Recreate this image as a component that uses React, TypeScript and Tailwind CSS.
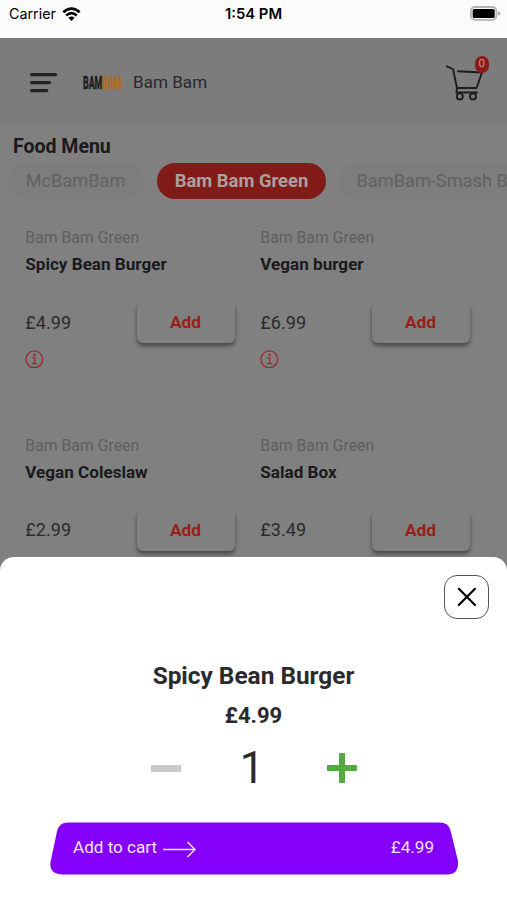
import React from "react";

type Item = { name: string; price: string; info: boolean };

const items: Item[] = [
  { name: "Spicy Bean Burger", price: "£4.99", info: true },
  { name: "Vegan burger", price: "£6.99", info: true },
  { name: "Vegan Coleslaw", price: "£2.99", info: false },
  { name: "Salad Box", price: "£3.49", info: false },
];

function StatusBar() {
  return (
    <div className="grid h-[38px] grid-cols-3 bg-[#fbfbfb] pt-[5px] font-[Inter,sans-serif] text-black">
      <div className="flex h-[18px] items-center gap-[6px] pl-[9px] text-[14.3px]">
        <span>Carrier</span>
        <svg width="19" height="15" viewBox="0 0 19 15" fill="none" stroke="black" strokeWidth="2.6">
          <path d="M1.3 5.2Q9.5-1.9 17.7 5.2M4.2 8.4Q9.5 3.8 14.8 8.4" />
          <path d="M6.4 10.7Q9.5 8.1 12.6 10.7L9.5 13.9Z" fill="black" stroke="none" />
        </svg>
      </div>
      <div className="flex h-[18px] items-center justify-center text-[14.8px] font-semibold whitespace-nowrap">1:54 PM</div>
      <div className="flex h-[17px] items-center justify-end pr-[6px]">
        <svg width="31" height="15" viewBox="0 0 31 15">
          <rect x="0.9" y="1" width="25.5" height="12.8" rx="4" fill="#fbfbfb" stroke="#b4b4b4" strokeWidth="1.8" />
          <rect x="2.7" y="2.9" width="22" height="9" rx="1.5" fill="black" />
          <path d="M28 5.2Q30.4 6 30.4 7.4T28 9.7Z" fill="#a9a9a9" />
        </svg>
      </div>
    </div>
  );
}

function Header() {
  return (
    <header className="flex h-[88px] items-center bg-[#7c7c7c] pt-px pl-[30px] pr-[16px]">
      <svg width="28" height="21" viewBox="0 0 28 21" stroke="#242428" strokeWidth="3.2" strokeLinecap="round">
        <path d="M1.6 2.6H25.7M1.6 10.6H19.6M1.6 18.6H16.8" />
      </svg>
      <div className="ml-[25px] w-[38px]">
        <div className="w-[74px] origin-left scale-x-[0.505] whitespace-nowrap text-[17.5px] leading-[18px] font-bold">
          <span className="text-[#1d1d22] [-webkit-text-stroke:0.6px_#1d1d22]">BAM</span>
          <span className="text-[#b06a1c] [-webkit-text-stroke:0.6px_#b06a1c]">BAM</span>
        </div>
      </div>
      <span className="ml-[12px] text-[17.1px] text-[#29292c]">Bam Bam</span>
      <div className="relative ml-auto h-[50px] w-[45px]">
        <svg width="45" height="50" viewBox="0 0 45 50" fill="none" stroke="#1d1d20" strokeWidth="1.9" strokeLinecap="round" strokeLinejoin="round">
          <path d="M.9 8.3L7 11L11 30H30.5L36 14.5L12 13.2M11 30L10.4 34.5H31" />
          <circle cx="13.8" cy="38.4" r="3" />
          <circle cx="27" cy="38.4" r="3" />
        </svg>
        <span className="absolute top-[-2px] left-[28.5px] flex h-[17px] w-[14.5px] items-center justify-center rounded-full bg-[#8c1c18] text-[11.5px] text-[#b89a99]">0</span>
      </div>
    </header>
  );
}

function Card({ item }: { item: Item }) {
  return (
    <article className="h-[207.5px]">
      <div className="pl-[0.3px] text-[15.8px] leading-[20px] text-[#5f5f5f]">Bam Bam Green</div>
      <h2 className="mt-[6px] pl-[0.3px] text-[17.1px] leading-[21px] font-bold text-[#1a1a1c]">{item.name}</h2>
      <div className="mt-[27px] flex h-[41px] items-center">
        <span className="w-[111.5px] pl-[0.3px] text-[18.1px] leading-[22px] text-[#2b2b2d]">{item.price}</span>
        <button className="h-[41px] w-[98px] rounded-[6px] bg-[#808080] pt-px text-[17.3px] font-bold text-[#961f1b] shadow-[0_3px_4px_rgba(0,0,0,0.45)]">Add</button>
      </div>
      {item.info && (
        <svg className="mt-[7px]" width="19" height="19" viewBox="0 0 19 19" fill="none" stroke="#98292c" strokeWidth="1.3">
          <circle cx="9.3" cy="9.3" r="8.4" />
          <path d="M7.2 7.8H9.8V13.4M7 13.7H12.3" />
          <circle cx="9.5" cy="5" r="0.6" fill="#98292c" />
        </svg>
      )}
    </article>
  );
}

function CartSheet() {
  return (
    <section className="absolute inset-x-0 bottom-0 flex h-[343.5px] flex-col items-center rounded-t-[14px] bg-white text-[#2b2b2e]">
      <button className="mt-[18px] mr-[18px] flex h-[44.5px] w-[45px] items-center justify-center self-end rounded-[13px] border-[1.5px] border-[#555]">
        <svg width="20" height="20" viewBox="0 0 20 20" stroke="black" strokeWidth="2.2" strokeLinecap="round">
          <path d="M1.8 1.8L18 18M18 1.8L1.8 18" />
        </svg>
      </button>
      <h1 className="mt-[41px] text-[24.4px] leading-[32px] font-bold">Spicy Bean Burger</h1>
      <div className="mt-[11.5px] text-[22px] leading-[24px] font-bold">£4.99</div>
      <div className="mt-[15.5px] flex h-[50px] w-[206px] items-center justify-between">
        <span className="h-[7px] w-[30px] bg-[#cacacb]" />
        <span className="-ml-[4px] pt-px text-[43.5px] leading-[50px]">1</span>
        <svg className="-mr-px" width="30" height="30" viewBox="0 0 30 30" fill="#52aa40">
          <path d="M12 0H18V12H30V18H18V30H12V18H0V12H12Z" />
        </svg>
      </div>
      <button className="relative mt-[28.5px] ml-px flex h-[53px] w-[409px] items-center justify-between pr-[24.5px] pl-[23.5px] text-[17.1px] text-[#f5e6ff]">
        <svg className="absolute inset-0" width="409" height="53" viewBox="0 0 410 53" preserveAspectRatio="none" fill="#8500fb">
          <path d="M18 .5H390.5Q399.5.5 401.5 8.5L409 39Q410 52.500 398 52.500H12Q-1 52 .5 40L7 9.5Q9 .5 18 .5Z" />
        </svg>
        <span className="relative flex items-center gap-[5.5px]">
          Add to cart
          <svg className="mt-[4px]" width="33" height="17" viewBox="0 0 33 17" fill="none" stroke="#f5e6ff" strokeWidth="1.5">
            <path d="M0 8.5H32M24.5 1L32 8.5L24.5 16" />
          </svg>
        </span>
        <span className="relative">£4.99</span>
      </button>
    </section>
  );
}

export default function App() {
  return (
    <div className="relative h-[900px] w-[507px] overflow-hidden bg-[#808080] font-[Roboto,sans-serif]">
      <StatusBar />
      <Header />
      <main>
        <h1 className="pt-[8px] pl-[13px] text-[19.5px] leading-[26px] font-bold text-[#1a1a1c]">Food Menu</h1>
        <nav className="mt-[3px] flex h-[36px] gap-[13px] pl-[8px] text-[18.2px] leading-[36px] whitespace-nowrap">
          <span className="w-[136px] shrink-0 rounded-full bg-[#7d7d7d] pr-px text-center text-[#626262]">McBamBam</span>
          <span className="w-[169px] shrink-0 rounded-full bg-[#811b18] text-center text-[18.4px] font-bold text-[#aaa09f]">Bam Bam Green</span>
          <span className="w-[220px] shrink-0 rounded-full bg-[#7d7d7d] pl-[17.5px] text-[#626262]">BamBam-Smash Burger</span>
        </nav>
        <div className="grid grid-cols-[235px_235px] pt-[29px] pl-[25px]">
          {items.map((item) => (
            <Card key={item.name} item={item} />
          ))}
        </div>
      </main>
      <CartSheet />
    </div>
  );
}
